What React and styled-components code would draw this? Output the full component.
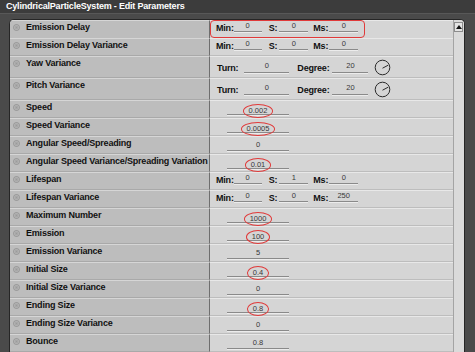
import React from "react";
import styled, { createGlobalStyle } from "styled-components";

const GlobalStyle = createGlobalStyle`
  html, body { margin: 0; padding: 0; background: #484848; overflow: hidden; }
  * { box-sizing: border-box; }
`;

const Window = styled.div`
  width: 475px;
  height: 352px;
  background: #484848;
  display: flex;
  flex-direction: column;
  font-family: "Liberation Sans", Arial, sans-serif;
  overflow: hidden;
`;

const TitleBar = styled.div`
  height: 14px;
  flex: none;
  background: #3c3c3c;
  border-bottom: 1px solid #585858;
  color: #ffffff;
  font-weight: bold;
  font-size: 9px;
  letter-spacing: -0.2px;
  line-height: 13px;
  padding-left: 6px;
`;

const Frame = styled.div`
  flex: 1;
  display: flex;
  padding: 5px 10px 0 9px;
  background: #4a4a4a;
  min-height: 0;
`;

const Panel = styled.div`
  flex: 1;
  display: flex;
  border: 1px solid #262626;
  border-bottom: none;
  border-radius: 5px 5px 0 0;
  overflow: hidden;
  background: #d5d5d5;
`;

const Rows = styled.div`
  flex: 1;
  display: flex;
  flex-direction: column;
`;

const Row = styled.div`
  display: grid;
  grid-template-columns: 200px 1fr;
  height: ${(p) => p.$h}px;
  flex: none;
`;

const LabelCell = styled.div`
  background: #bdbdbd;
  border-top: 1px solid #d6d6d6;
  border-bottom: 1px solid #a9a9a9;
  border-right: 1px solid #6e6e6e;
  display: flex;
  align-items: flex-start;
  gap: 6px;
  padding: 1px 0 0 3px;
  font-weight: bold;
  font-size: 9px;
  letter-spacing: -0.2px;
  color: #111;
  line-height: 10px;
  white-space: nowrap;
`;

const ValueCell = styled.div`
  background: #d5d5d5;
  border-top: 1px solid #e8e8e8;
  border-bottom: 1px solid #bdbdbd;
  display: flex;
  align-items: ${(p) => (p.$center ? "center" : "flex-start")};
  padding-left: ${(p) => p.$pl}px;
  padding-top: ${(p) => p.$pt}px;
`;

const Highlight = styled.div`
  display: flex;
  align-items: flex-start;
  width: 155px;
  height: 18px;
  margin-top: -1px;
  padding: 1px 0 0 5px;
  border: 1px solid #e03a3a;
  border-radius: 4px;
`;

const Line = styled.div`
  display: flex;
  align-items: flex-start;
`;

const Caption = styled.span`
  font-weight: bold;
  font-size: 9px;
  letter-spacing: -0.2px;
  color: #111;
  line-height: 10px;
  margin-right: ${(p) => p.$mr}px;
  margin-top: 1px;
`;

const Field = styled.div`
  width: ${(p) => p.$w}px;
  height: ${(p) => p.$h || 10}px;
  border-bottom: 1px solid #8a8a8a;
  box-shadow: 0 1px 0 #ececec;
  text-align: center;
  font-size: 7.5px;
  line-height: ${(p) => p.$lh || 8}px;
  color: #383838;
  margin-right: ${(p) => p.$mr || 0}px;
`;

const Circled = styled.span`
  display: inline-block;
  padding: 2px 5px;
  border: 1px solid #e03a3a;
  border-radius: 50%;
  line-height: 8px;
  vertical-align: middle;
`;

const IconBox = styled.span`
  display: inline-flex;
  width: 7px;
  height: 7px;
  margin-top: 2px;
  flex: none;
`;

const Scrollbar = styled.div`
  width: 11px;
  flex: none;
  background: #dadada;
  border-left: 1px solid #a4a4a4;
  display: flex;
  flex-direction: column;
  padding: 2px 1px 0 0;
`;

const ScrollButton = styled.div`
  height: 10px;
  background: #e4e4e4;
  border: 1px solid #8c8c8c;
  display: flex;
  align-items: center;
  justify-content: center;
`;

const Expander = () => (
  <IconBox>
    <svg width="7" height="7" viewBox="0 0 7 7">
      <circle cx="3.5" cy="3.5" r="3" fill="none" stroke="#8a8a8a" strokeWidth="0.8" />
      <path d="M3.5 1.4V5.6M1.4 3.5H5.6M2 2L5 5M5 2L2 5" stroke="#9a9a9a" strokeWidth="0.6" />
    </svg>
  </IconBox>
);

const Dial = () => (
  <svg width="17" height="17" viewBox="0 0 17 17" style={{ marginLeft: 6 }}>
    <circle cx="8.5" cy="8.5" r="7.3" fill="none" stroke="#2a2a2a" strokeWidth="1" />
    <path d="M8.5 9.2L14.2 6.2" stroke="#2a2a2a" strokeWidth="1" />
  </svg>
);

const TimeValues = ({ v }) => (
  <Line>
    <Caption $mr={0}>Min:</Caption>
    <Field $w={28} $mr={7}>{v[0]}</Field>
    <Caption $mr={2}>S:</Caption>
    <Field $w={29} $mr={5}>{v[1]}</Field>
    <Caption $mr={1}>Ms:</Caption>
    <Field $w={29}>{v[2]}</Field>
  </Line>
);

const rows = [
  { label: "Emission Delay", type: "time", v: [0, 0, 0], boxed: true },
  { label: "Emission Delay Variance", type: "time", v: [0, 0, 0] },
  { label: "Yaw Variance", type: "turn", v: [0, 20] },
  { label: "Pitch Variance", type: "turn", v: [0, 20] },
  { label: "Speed", type: "single", v: "0.002", c: true },
  { label: "Speed Variance", type: "single", v: "0.0005", c: true },
  { label: "Angular Speed/Spreading", type: "single", v: "0" },
  { label: "Angular Speed Variance/Spreading Variation", type: "single", v: "0.01", c: true },
  { label: "Lifespan", type: "time", v: [0, 1, 0] },
  { label: "Lifespan Variance", type: "time", v: [0, 0, 250] },
  { label: "Maximum Number", type: "single", v: "1000", c: true },
  { label: "Emission", type: "single", v: "100", c: true },
  { label: "Emission Variance", type: "single", v: "5" },
  { label: "Initial Size", type: "single", v: "0.4", c: true },
  { label: "Initial Size Variance", type: "single", v: "0" },
  { label: "Ending Size", type: "single", v: "0.8", c: true },
  { label: "Ending Size Variance", type: "single", v: "0" },
  { label: "Bounce", type: "single", v: "0.8" },
];

const renderValue = (r) => {
  if (r.type === "time") {
    if (r.boxed) {
      return (
        <ValueCell $pl={0} $pt={0}>
          <Highlight>
            <TimeValues v={r.v} />
          </Highlight>
        </ValueCell>
      );
    }
    return (
      <ValueCell $pl={6} $pt={1}>
        <TimeValues v={r.v} />
      </ValueCell>
    );
  }
  if (r.type === "turn") {
    return (
      <ValueCell $pl={7} $pt={0} $center>
        <Line>
          <Caption $mr={6}>Turn:</Caption>
          <Field $w={45} $mr={8} $h={11}>{r.v[0]}</Field>
          <Caption $mr={3}>Degree:</Caption>
          <Field $w={36} $h={11}>{r.v[1]}</Field>
        </Line>
        <Dial />
      </ValueCell>
    );
  }
  return (
    <ValueCell $pl={17} $pt={3}>
      <Field $w={62} $h={11} $lh={10}>
        {r.c ? <Circled>{r.v}</Circled> : r.v}
      </Field>
    </ValueCell>
  );
};

export default function App() {
  return (
    <>
      <GlobalStyle />
      <Window>
        <TitleBar>CylindricalParticleSystem - Edit Parameters</TitleBar>
        <Frame>
          <Panel>
            <Rows>
              {rows.map((r) => (
                <Row key={r.label} $h={r.type === "turn" ? 22 : 18}>
                  <LabelCell>
                    <Expander />
                    {r.label}
                  </LabelCell>
                  {renderValue(r)}
                </Row>
              ))}
            </Rows>
            <Scrollbar>
              <ScrollButton>
                <svg width="6" height="4" viewBox="0 0 6 4">
                  <path d="M0 4L3 0L6 4Z" fill="#111" />
                </svg>
              </ScrollButton>
            </Scrollbar>
          </Panel>
        </Frame>
      </Window>
    </>
  );
}
